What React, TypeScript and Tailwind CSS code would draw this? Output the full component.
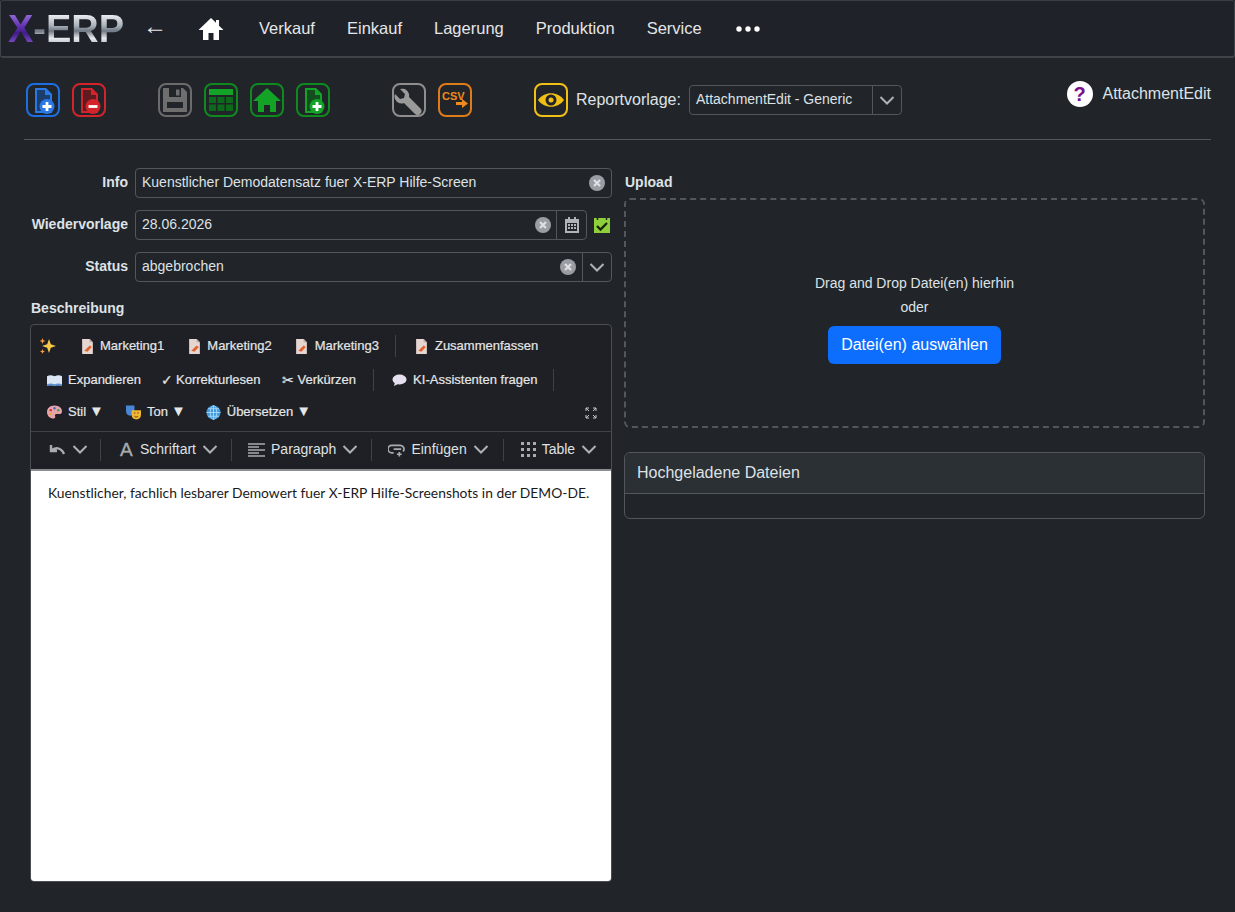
import type { ReactNode } from 'react';

const Box = ({ color, children }: { color: string; children: ReactNode }) => (
  <div className="w-[34px] h-[34px] shrink-0 rounded-[8px] border-2 flex items-center justify-center" style={{ borderColor: color }}>
    <svg viewBox="0 0 30 30" className="w-[30px] h-[30px]">{children}</svg>
  </div>
);

const FileBadge = ({ fill, badge, minus }: { fill: string; badge: string; minus?: boolean }) => (
  <>
    <path d="M7 3h11l6 6v19H7z" fill={fill} />
    <path d="M9 5h8v5h5v16H9z" fill="#14161a" opacity="0.6" />
    <circle cx="19" cy="21.500" r="7.500" fill={badge} />
    <path d={minus ? 'M14.500 21.500h9' : 'M14.500 21.500h9M19 17v9'} stroke="#fff" strokeWidth="2.800" />
  </>
);

const Sep = ({ h = 'h-[22px]' }: { h?: string }) => <div className={`w-px ${h} bg-[#3d4248] shrink-0`} />;

const ClearIcon = () => (
  <svg viewBox="0 0 16 16" className="w-4 h-4 shrink-0">
    <circle cx="8" cy="8" r="8" fill="#9a9da3" />
    <path d="M5 5l6 6M11 5l-6 6" stroke="#dee0e3" strokeWidth="2.200" />
  </svg>
);

const DocEmoji = () => (
  <span className="w-[14px] flex justify-center shrink-0">
    <svg viewBox="0 0 12 14" className="w-[13px] h-[15px]">
      <path d="M1 0h7l3 3v11H1z" fill="#e6d6d2" />
      <path d="M8 0l3 3H8z" fill="#b9a9a6" />
      <path d="M3 11l5-5 2 1.500-4 4.500z" fill="#e2622f" />
    </svg>
  </span>
);

const ToolBtn = ({ icon, label, gap = 'gap-[6px]' }: { icon: ReactNode; label: string; gap?: string }) => (
  <span className={`flex items-center ${gap} text-[13px] text-[#e4e6e8] whitespace-nowrap [-webkit-text-stroke:0.2px_#e4e6e8]`}>
    {icon}
    {label}
  </span>
);

const MenuArrow = () => <span className="ml-[3px] mb-[3px] text-[15px] leading-none text-[#e4e6e8]">▼</span>;

const Caret = () => (
  <svg viewBox="0 0 16 9" className="w-4 h-[9px] shrink-0" fill="none" stroke="#aeb2b7" strokeWidth="2">
    <path d="M1.500 1l6.500 6.500L14.500 1" />
  </svg>
);

const Field = ({ label, children }: { label: string; children: ReactNode }) => (
  <div className="flex items-center h-[30px]">
    <label className="w-[111px] pr-[7px] pb-[2px] text-right font-bold text-[#dee2e6] whitespace-nowrap">{label}</label>
    {children}
  </div>
);

export default function App() {
  return (
    <div className="w-[1235px] h-[912px] overflow-hidden bg-[#212529] text-[14px] text-[#dee2e6] font-['Liberation_Sans',Arial,sans-serif]">
      <nav className="h-[58px] flex items-center border border-b-2 border-[#3f434a] border-t-[#3a3e44] rounded-[3px] bg-[#1f2229] text-[16.5px] text-[#e4e6e8]">
        <span className="ml-[7px] w-[120px] text-[38px] leading-none font-bold whitespace-nowrap">
          <span className="bg-[linear-gradient(180deg,#9a74de_10%,#5f2fb0_45%,#3f1d86_60%,#8a5ad8_90%)] bg-clip-text text-transparent">X</span>
          <span className="bg-[linear-gradient(180deg,#eef1f5_15%,#a9b1ba_42%,#6f7883_55%,#e8ebef_72%,#aab1b9_90%)] bg-clip-text text-transparent">-ERP</span>
        </span>
        <span className="ml-[15px] mb-[5px] text-[24px] leading-none">←</span>
        <svg viewBox="0 0 26 24" className="ml-[31px] w-[26px] h-[24px]">
          <path d="M13 1L0.500 13H5v10h5.500v-7h5v7H21V13h4.500L21 8.700V3h-3v2.800z" fill="#fff" />
        </svg>
        <div className="ml-[35px] flex items-center gap-[32px]">
          <span>Verkauf</span>
          <span>Einkauf</span>
          <span>Lagerung</span>
          <span>Produktion</span>
          <span>Service</span>
          <svg viewBox="0 0 28 6" className="w-[28px] h-[6px]" fill="#fff">
            <circle cx="5" cy="3" r="2.700" />
            <circle cx="14" cy="3" r="2.700" />
            <circle cx="23" cy="3" r="2.700" />
          </svg>
        </div>
      </nav>

      <div className="mx-[24px] mt-[22px] h-[60px] border-b border-[#53575c] flex items-start">
        <div className="flex mt-[3px] ml-[2px]">
          <div className="flex gap-[12px]">
            <Box color="#1c6fe0"><FileBadge fill="#2a7ae6" badge="#2a7ae6" /></Box>
            <Box color="#d3232b"><FileBadge fill="#d3232b" badge="#d3232b" minus /></Box>
          </div>
          <div className="flex gap-[12px] ml-[52px]">
            <Box color="#6b6b6b">
              <path d="M3 3h20l4 4v20H3z" fill="#6e6e6e" />
              <path d="M9 3h12v9H9z" fill="#212529" />
              <path d="M16 4.500h3.500v6H16z" fill="#6e6e6e" />
              <path d="M7 17h16v6H7z" fill="#212529" />
            </Box>
            <Box color="#0f8a1f">
              <path d="M3 4h24v6H3z" fill="#12a327" />
              <path d="M3 12h7v6H3zM11.500 12h7v6h-7zM20 12h7v6h-7zM3 19.500h7v6.500H3zM11.500 19.500h7v6.500h-7zM20 19.500h7v6.500h-7z" fill="#0c6b1a" />
            </Box>
            <Box color="#0f8a1f">
              <path d="M15 3L1 16h5v11h6v-7h6v7h6V16h5z" fill="#12a327" />
            </Box>
            <Box color="#0f8a1f"><FileBadge fill="#12a327" badge="#12a327" /></Box>
          </div>
          <div className="flex gap-[12px] ml-[62px]">
            <Box color="#8e8e8e">
              <path d="M25 24l-11-11a7 7 0 0 0-9-8l5 5-1 4-4 1-5-5a7 7 0 0 0 9 9l11 11a2.500 2.500 0 0 0 5-6z" fill="#9a9a9a" transform="translate(1 -1)" />
            </Box>
            <Box color="#e07b1c">
              <text x="2" y="15" fontSize="11" fontWeight="700" fill="#f08a1d" fontFamily="Liberation Sans">CSV</text>
              <path d="M16 17h6v-3l6 4.500-6 4.500v-3h-6z" fill="#f08a1d" />
            </Box>
          </div>
          <div className="ml-[62px]">
            <Box color="#f2c014">
              <path d="M2 15c6-9 20-9 26 0-6 9-20 9-26 0z" fill="#f2c014" />
              <circle cx="15" cy="15" r="5.500" fill="#212529" />
              <circle cx="15" cy="15" r="2.500" fill="#f2c014" />
            </Box>
          </div>
        </div>
        <span className="ml-[8px] mt-[8px] text-[16px] text-[#dee2e6]">Reportvorlage:</span>
        <div className="ml-[8px] mt-[5px] w-[213px] h-[30px] flex items-center border border-[#53575c] rounded-[4px]">
          <span className="flex-1 pl-[6px] pb-[2px] text-[#dee2e6]">AttachmentEdit - Generic</span>
          <div className="w-[29px] h-full border-l border-[#53575c] flex items-center justify-center"><Caret /></div>
        </div>
        <div className="ml-auto mt-[1px] flex items-center gap-[10px]">
          <div className="w-[26px] h-[26px] rounded-full bg-white flex items-center justify-center text-[20px] font-bold text-[#7a0f8c] leading-none">?</div>
          <span className="text-[16px] text-[#dee2e6]">AttachmentEdit</span>
        </div>
      </div>

      <div className="flex mt-[28px] ml-[24px] gap-[12px]">
        <div className="w-[588px]">
          <div className="flex flex-col gap-[12px]">
            <Field label="Info">
              <div className="flex-1 h-[30px] flex items-center pl-[6px] pr-[6px] border border-[#53575c] rounded-[4px]">
                <span className="flex-1 pb-[2px]">Kuenstlicher Demodatensatz fuer X-ERP Hilfe-Screen</span>
                <ClearIcon />
              </div>
            </Field>
            <Field label="Wiedervorlage">
              <div className="w-[452px] h-[30px] flex items-center pl-[6px] border border-[#53575c] rounded-[4px]">
                <span className="flex-1 pb-[2px]">28.06.2026</span>
                <ClearIcon />
                <div className="ml-[5px] w-[30px] h-full border-l border-[#53575c] flex items-center justify-center">
                  <svg viewBox="0 0 14 16" className="w-[14px] h-[16px]">
                    <path d="M3 0h2v2h4V0h2v2h3v14H0V2h3z" fill="#b0b3b8" />
                    <path d="M2 6h10v8H2z" fill="#212529" />
                    <path d="M3 7h2v2H3zM6 7h2v2H6zM9 7h2v2H9zM3 10h2v2H3zM6 10h2v2H6zM9 10h2v2H9z" fill="#b0b3b8" />
                  </svg>
                </div>
              </div>
              <svg viewBox="0 0 18 18" className="ml-[6px] w-[18px] h-[18px]">
                <path d="M1 2h16v15H1z" fill="#8fcf3c" />
                <path d="M4.500 0v4M13.500 0v4" stroke="#1f2a14" strokeWidth="1.500" />
                <path d="M4 10l3.500 3.500L14 7" fill="none" stroke="#16240c" strokeWidth="2.400" />
              </svg>
            </Field>
            <Field label="Status">
              <div className="flex-1 h-[30px] flex items-center pl-[6px] border border-[#53575c] rounded-[4px]">
                <span className="flex-1 pb-[2px]">abgebrochen</span>
                <ClearIcon />
                <div className="ml-[6px] w-[29px] h-full border-l border-[#53575c] flex items-center justify-center"><Caret /></div>
              </div>
            </Field>
          </div>

          <div className="mt-[16px] ml-[7px] font-bold text-[#dee2e6]">Beschreibung</div>

          <div className="mt-[5px] ml-[6px] w-[582px] h-[558px] flex flex-col border border-[#4a4e54] rounded-[4px] bg-[#1e2025]">
            <div className="h-[106px] relative">
              <div className="flex items-center h-[20px] mt-[11px] ml-[8px]">
                <svg viewBox="0 0 18 18" className="w-[18px] h-[18px]">
                  <path d="M10 2l1.800 5.200L17 9l-5.200 1.800L10 16l-1.800-5.200L3 9l5.200-1.800z" fill="#f7c948" />
                  <path d="M3.500 1l.8 2.200 2.200.8-2.200.8-.8 2.200-.8-2.200L.5 4l2.200-.8zM3.500 12l.7 1.800 1.800.7-1.800.7-.7 1.800-.7-1.800-1.800-.7 1.800-.7z" fill="#f59e42" />
                </svg>
                <div className="ml-[23px] flex items-center gap-[23px]">
                  <ToolBtn icon={<DocEmoji />} label="Marketing1" />
                  <ToolBtn icon={<DocEmoji />} label="Marketing2" />
                  <ToolBtn icon={<DocEmoji />} label="Marketing3" />
                </div>
                <div className="ml-[16px]"><Sep /></div>
                <div className="ml-[19px]"><ToolBtn icon={<DocEmoji />} label="Zusammenfassen" /></div>
              </div>
              <div className="flex items-center h-[20px] mt-[14px] ml-[16px]">
                <ToolBtn
                  icon={
                    <svg viewBox="0 0 16 12" className="w-[15px] h-[12px]">
                      <path d="M0 2c3-1.500 5-1 8 0 3-1 5-1.500 8 0v10c-3-1-5-1-8 0-3-1-5-1-8 0z" fill="#dbe6f5" />
                      <path d="M0 10.500c3-1 5-1 8 0 3-1 5-1 8 0V12H0z" fill="#5b8fd0" />
                    </svg>
                  }
                  label="Expandieren"
                />
                <span className="ml-[20px]"><ToolBtn gap="gap-0" icon={<span className="w-[15px] text-[14px] leading-none">✓</span>} label="Korrekturlesen" /></span>
                <span className="ml-[21px]"><ToolBtn gap="gap-0" icon={<span className="w-[16px] text-[14px] leading-none">✂</span>} label="Verkürzen" /></span>
                <div className="ml-[17px]"><Sep /></div>
                <span className="ml-[18px]">
                  <ToolBtn
                    icon={
                      <svg viewBox="0 0 15 12" className="w-[15px] h-[12px]">
                        <ellipse cx="7.500" cy="5.500" rx="7" ry="5" fill="#e6dff0" />
                        <path d="M3 8l-1 4 4-2z" fill="#e6dff0" />
                      </svg>
                    }
                    label="KI-Assistenten fragen"
                  />
                </span>
                <div className="ml-[16px]"><Sep /></div>
              </div>
              <div className="flex items-center h-[20px] mt-[12px] ml-[16px]">
                <ToolBtn
                  icon={
                    <svg viewBox="0 0 16 14" className="w-[15px] h-[14px]">
                      <path d="M8 0C3 0 0 3 0 7s3 7 7 7c2 0 2-1.500 1.500-3S9 9 11 9h3c1.500 0 2-1 2-3 0-3-3-6-8-6z" fill="#e8a3a8" />
                      <circle cx="4" cy="5" r="1.300" fill="#c7313a" />
                      <circle cx="8" cy="3" r="1.300" fill="#3a6fd0" />
                      <circle cx="12" cy="5" r="1.300" fill="#3aa050" />
                      <circle cx="4" cy="9" r="1.300" fill="#d6b02e" />
                    </svg>
                  }
                  label="Stil"
                />
                <MenuArrow />
                <span className="ml-[22px]">
                  <ToolBtn
                    icon={
                      <svg viewBox="0 0 16 15" className="w-[15px] h-[15px]">
                        <path d="M0 0h9v6c0 3-2 5-4.500 5S0 9 0 6z" fill="#4a86d8" />
                        <path d="M6 5h10v5c0 3-2 5-5 5s-5-2-5-5z" fill="#f2b632" />
                        <path d="M8.500 8h1.500M12 8h1.500M9 11.500c1 1 3 1 4 0" stroke="#5c3a08" strokeWidth="1" fill="none" />
                      </svg>
                    }
                    label="Ton"
                  />
                </span>
                <MenuArrow />
                <span className="ml-[20px]">
                  <ToolBtn
                    icon={
                      <svg viewBox="0 0 16 16" className="w-[15px] h-[15px]">
                        <circle cx="8" cy="8" r="7.500" fill="#3e9be0" />
                        <path d="M0.500 8h15M8 0.500v15M2 4h12M2 12h12" stroke="#bfe2f8" strokeWidth="0.800" />
                        <ellipse cx="8" cy="8" rx="3.500" ry="7.500" fill="none" stroke="#bfe2f8" strokeWidth="0.800" />
                      </svg>
                    }
                    label="Übersetzen"
                  />
                </span>
                <MenuArrow />
              </div>
              <svg viewBox="0 0 12 12" className="absolute right-[14px] top-[82px] w-[12px] h-[12px]" fill="none" stroke="#c4c7cb" strokeWidth="1">
                <path d="M1 4V1h3M8 1h3v3M11 8v3H8M4 11H1V8M1 1l3 3M11 1L8 4M11 11L8 8M1 11l3-3" />
              </svg>
            </div>

            <div className="h-[38px] pb-[2px] flex items-center border-t border-[#3d4248] text-[14px] text-[#dfe1e4]">
              <div className="ml-[17px] flex items-center gap-[6px]">
                <svg viewBox="0 0 18 12" className="w-[18px] h-[12px]" fill="none" stroke="#a8abb0" strokeWidth="2.400">
                  <path d="M3 1v6h6M3 7c4-4 10-4 13 3" />
                </svg>
                <Caret />
              </div>
              <div className="ml-[12px]"><Sep /></div>
              <div className="ml-[19px] flex items-center">
                <span className="w-[13px] text-[19px] leading-none text-[#a8abb0] [-webkit-text-stroke:0.4px_#a8abb0]">A</span>
                <span className="ml-[7px]">Schriftart</span>
                <span className="ml-[6px]"><Caret /></span>
              </div>
              <div className="ml-[13px]"><Sep /></div>
              <div className="ml-[16px] flex items-center gap-[6px]">
                <svg viewBox="0 0 17 14" className="w-[17px] h-[14px]" stroke="#a8abb0" strokeWidth="1.600">
                  <path d="M0 1h17M0 4h11M0 7h17M0 10h11M0 13h17" />
                </svg>
                <span>Paragraph</span>
                <Caret />
              </div>
              <div className="ml-[13px]"><Sep /></div>
              <div className="ml-[16px] flex items-center gap-[6px]">
                <svg viewBox="0 0 18 14" className="w-[17px] h-[14px]" fill="none" stroke="#a8abb0" strokeWidth="1.800">
                  <path d="M6 10H4a4 4 0 0 1 0-8h9a4 4 0 0 1 3 6.500M6 6h8M12 9v5M9.500 11.500h5" />
                </svg>
                <span>Einfügen</span>
                <Caret />
              </div>
              <div className="ml-[14px]"><Sep /></div>
              <div className="ml-[17px] flex items-center gap-[6px]">
                <div className="grid grid-cols-3 gap-[3px]">
                  {Array.from({ length: 9 }).map((_, i) => (
                    <span key={i} className="w-[3px] h-[3px] bg-[#a8abb0]" />
                  ))}
                </div>
                <span>Table</span>
                <Caret />
              </div>
            </div>

            <div className="h-[2px] bg-[#8a8d91]" />
            <div className="flex-1 bg-white rounded-b-[3px] px-[17px] pt-[12px] text-[13.85px] leading-[20px] text-[#1a1a1a] font-['Lato',sans-serif] whitespace-nowrap">
              Kuenstlicher, fachlich lesbarer Demowert fuer X-ERP Hilfe-Screenshots in der DEMO-DE.
            </div>
          </div>
        </div>

        <div className="w-[581px]">
          <div className="h-[30px] pb-[2px] pl-[1px] flex items-center font-bold text-[#dee2e6]">Upload</div>
          <div className="h-[230px] border-2 border-dashed border-[#53575c] rounded-[6px] flex flex-col items-center pt-[73px]">
            <span className="leading-[21px]">Drag and Drop Datei(en) hierhin</span>
            <span className="mt-[3px] leading-[21px]">oder</span>
            <button className="mt-[8px] h-[38px] w-[173px] rounded-[6px] bg-[#0d6efd] text-white text-[16px]">Datei(en) auswählen</button>
          </div>
          <div className="mt-[24px] h-[67px] border border-[#53575c] rounded-[6px] overflow-hidden">
            <div className="h-[41px] flex items-center px-[12px] bg-[#2b3035] border-b border-[#53575c] text-[16px]">Hochgeladene Dateien</div>
          </div>
        </div>
      </div>
    </div>
  );
}
